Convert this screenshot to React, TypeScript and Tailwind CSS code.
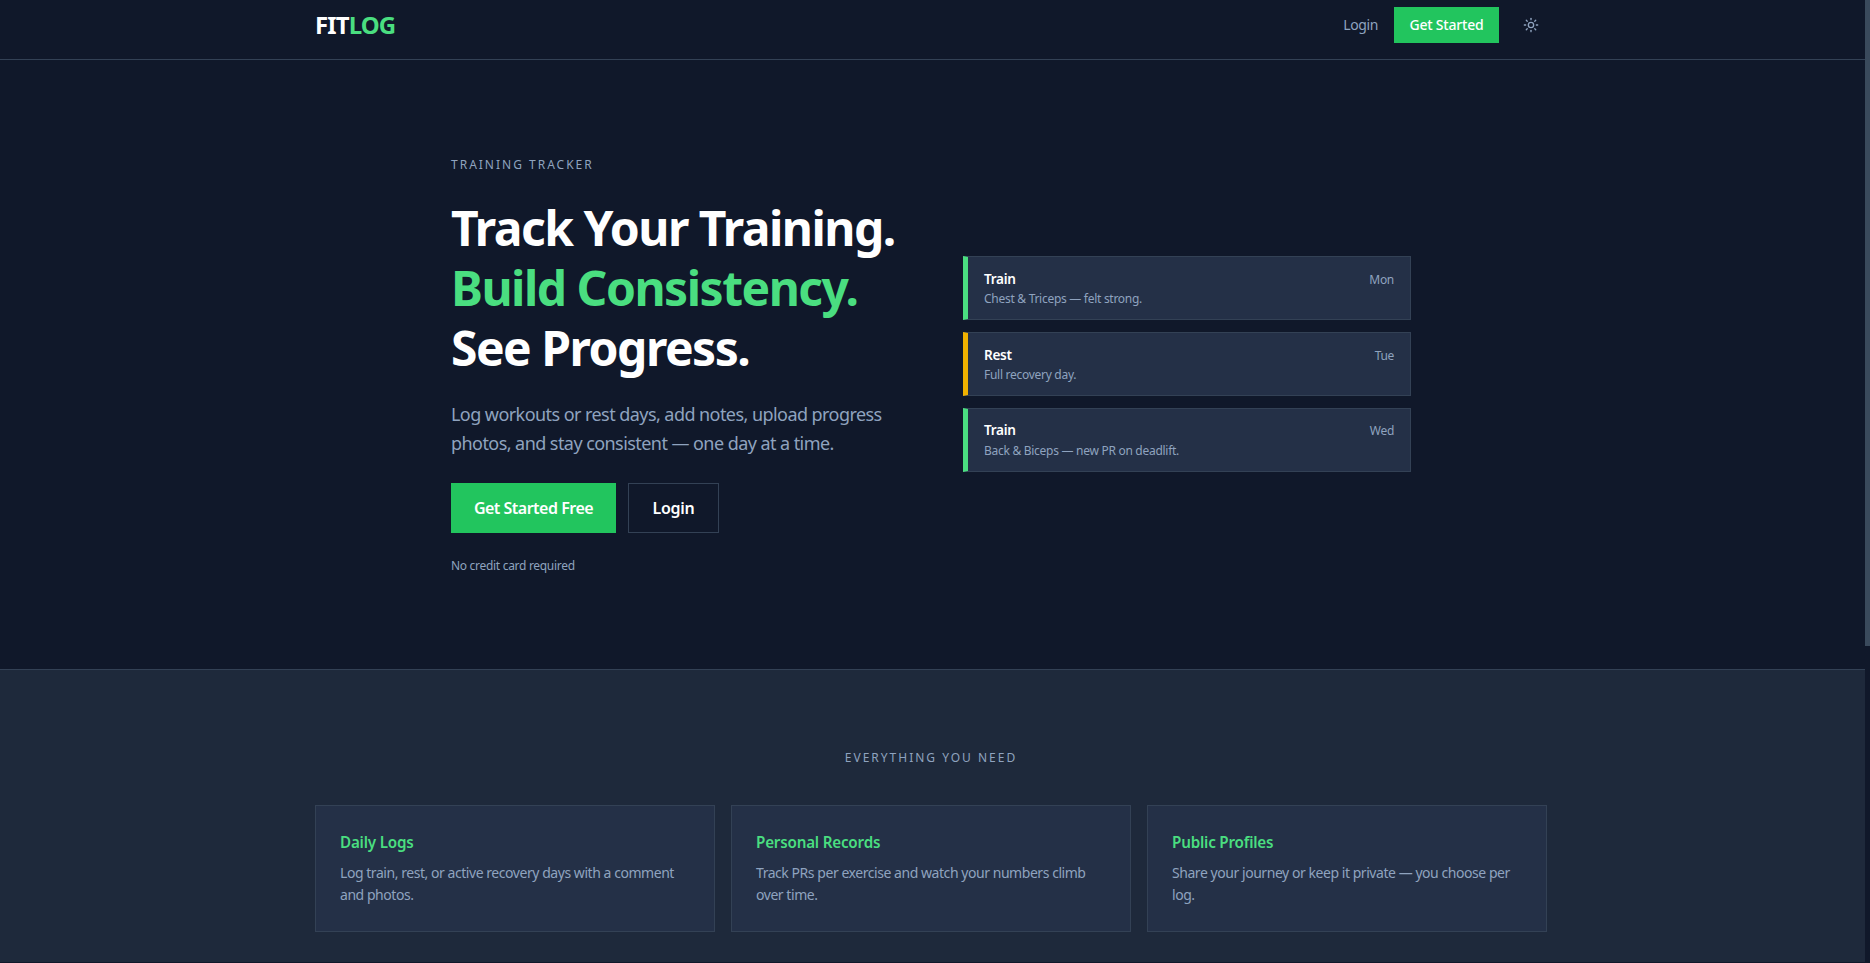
import { Sun } from "lucide-react";

const previewDays = [
  { kind: "Train", day: "Mon", note: "Chest & Triceps — felt strong.", accent: "border-l-[#4ade80]" },
  { kind: "Rest", day: "Tue", note: "Full recovery day.", accent: "border-l-[#f0b100]" },
  { kind: "Train", day: "Wed", note: "Back & Biceps — new PR on deadlift.", accent: "border-l-[#4ade80]" },
];

const features = [
  { title: "Daily Logs", text: "Log train, rest, or active recovery days with a comment and photos." },
  { title: "Personal Records", text: "Track PRs per exercise and watch your numbers climb over time." },
  { title: "Public Profiles", text: "Share your journey or keep it private — you choose per log." },
];

export default function App() {
  return (
    <div className="flex h-[963px] overflow-hidden bg-[#10182a] font-['Noto_Sans',sans-serif]">
      <div className="h-[962px] min-w-0 flex-1 overflow-hidden">
        <header className="border-b border-[#334155] pr-[3px]">
          <nav className="mx-auto flex h-[59px] max-w-[1280px] items-start justify-between px-6 pt-[7px]">
            <a className="mt-[3px] text-2xl/[30px] font-bold tracking-[-0.9px] text-white">
              FIT<span className="text-[#4ade80]">LOG</span>
            </a>
            <div className="flex items-center gap-4">
              <a className="text-sm tracking-[-0.4px] text-[#8fa3bf]">Login</a>
              <a className="flex h-9 w-[105px] items-center justify-center bg-[#22c55e] text-sm font-medium tracking-[-0.2px] text-white">
                Get Started
              </a>
              <button className="p-2 text-[#8fa3bf]">
                <Sun className="size-4" strokeWidth={2} />
              </button>
            </div>
          </nav>
        </header>

        <section className="border-b border-[#334155] py-[94px] pr-[3px]">
          <div className="mx-auto grid max-w-[960px] grid-cols-2 items-center gap-16">
            <div>
              <p className="mt-px mb-6 text-xs/[1.6] tracking-[2px] text-[#8fa3bf]">TRAINING TRACKER</p>
              <h1 className="mb-[22px] text-5xl/[60px] font-bold tracking-[-1.5px] text-white">
                Track Your Training.
                <br />
                <span className="text-[#4ade80]">Build Consistency.</span>
                <br />
                See Progress.
              </h1>
              <p className="mb-[25px] text-lg/[1.6] tracking-[-0.56px] text-[#8fa3bf]">
                Log workouts or rest days, add notes, upload progress photos, and stay consistent — one day at a time.
              </p>
              <div className="flex gap-3">
                <a className="flex h-[50px] w-[165px] items-center justify-center bg-[#22c55e] text-base font-semibold tracking-[-0.5px] text-white">
                  Get Started Free
                </a>
                <a className="flex h-[50px] w-[91px] items-center justify-center border border-[#334155] text-base font-semibold tracking-[-0.3px] text-white">
                  Login
                </a>
              </div>
              <p className="mt-[23px] text-xs/[1.6] tracking-[-0.3px] text-[#8fa3bf]">No credit card required</p>
            </div>

            <div className="mb-px flex flex-col gap-3">
              {previewDays.map((item) => (
                <div
                  key={item.day}
                  className={`flex items-start justify-between border border-l-[5px] border-[#334155] bg-[#243047] px-4 py-[10.5px] ${item.accent}`}
                >
                  <div>
                    <p className="text-[13.6px]/[1.6] font-semibold tracking-[-0.3px] text-white">{item.kind}</p>
                    <p className="text-xs/[1.6] tracking-[-0.28px] text-[#8fa3bf]">{item.note}</p>
                  </div>
                  <span className="mt-0.5 text-xs/[1.6] tracking-[-0.3px] text-[#8fa3bf]">{item.day}</span>
                </div>
              ))}
            </div>
          </div>
        </section>

        <section className="h-[300px] bg-[#1e293b] pt-[78px] pr-[3px]">
          <p className="mb-[38px] text-center text-xs/[1.6] tracking-[2px] text-[#8fa3bf]">EVERYTHING YOU NEED</p>
          <div className="mx-auto grid max-w-[1280px] grid-cols-3 gap-4 px-6">
            {features.map((feature) => (
              <div key={feature.title} className="border border-[#334155] bg-[#243047] p-6">
                <h3 className="mb-1.5 text-[15.2px]/[25.6px] font-semibold tracking-[-0.2px] text-[#4ade80]">
                  {feature.title}
                </h3>
                <p className="text-sm/[1.6] tracking-[-0.45px] text-[#8fa3bf]">{feature.text}</p>
              </div>
            ))}
          </div>
        </section>
      </div>

      <div className="w-[5px] shrink-0">
        <div className="h-[646px] bg-[#3a4a5c]" />
      </div>
    </div>
  );
}
